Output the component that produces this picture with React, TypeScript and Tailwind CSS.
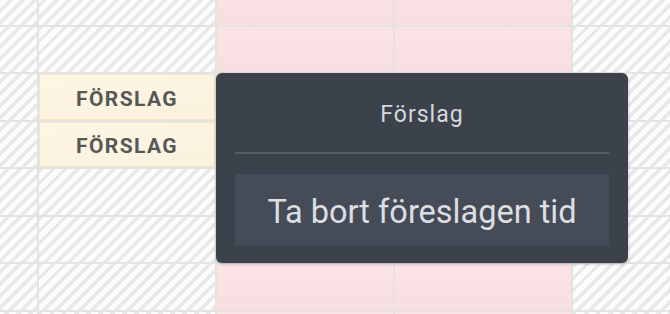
import React from "react";

const COLS = 5;
const ROWS = 8;

function isPink(col: number) {
  return col === 2 || col === 3;
}

function Cell({ row, col }: { row: number; col: number }) {
  if (col === 1 && (row === 2 || row === 3)) {
    return (
      <div className="flex h-[45.5px] items-center justify-center border-[1.5px] border-[#f2e6c4] bg-gradient-to-br from-[#fdf6e5] to-[#fbf2dd] pt-[5px]">
        <span className="text-[21px] font-bold uppercase tracking-[1.4px] text-[#575757]">Förslag</span>
      </div>
    );
  }
  if (isPink(col)) {
    return <div className="h-[45.5px] bg-gradient-to-b from-[#fce4e6] to-[#f7dfe1]" />;
  }
  return (
    <div className="h-[45.5px] bg-[repeating-linear-gradient(135deg,#e8e8e8_0px,#e8e8e8_3.5px,#fcfcfc_3.5px,#fcfcfc_8.5px)]" />
  );
}

export default function App() {
  const cells = [];
  for (let r = 0; r < ROWS; r++) {
    for (let c = 0; c < COLS; c++) {
      cells.push(<Cell key={`${r}-${c}`} row={r} col={c} />);
    }
  }

  return (
    <div className="relative h-[314px] w-[670px] overflow-hidden bg-white font-['Roboto',sans-serif]">
      <div className="-ml-[139px] -mt-[21px] grid w-[892px] grid-cols-[repeat(5,176px)] gap-[2px] bg-[#e3e3e1]">
        {cells}
      </div>

      <div className="absolute left-[216px] top-[73px] flex w-[412px] flex-col rounded-[6px] bg-[#3b424b] px-[19px] pb-[18px] shadow-[0_1px_3px_rgba(0,0,0,0.25)]">
        <div className="flex h-[81px] items-center justify-center border-b-2 border-[#575d66] pt-[5px]">
          <span className="text-[23px] tracking-[1px] text-[#d6d8db]">Förslag</span>
        </div>
        <div className="mt-[20px] flex h-[71px] items-center justify-center bg-[#464c57] pt-[5px]">
          <span className="text-[32.5px] text-[#dcdee1]">Ta bort föreslagen tid</span>
        </div>
      </div>
    </div>
  );
}
